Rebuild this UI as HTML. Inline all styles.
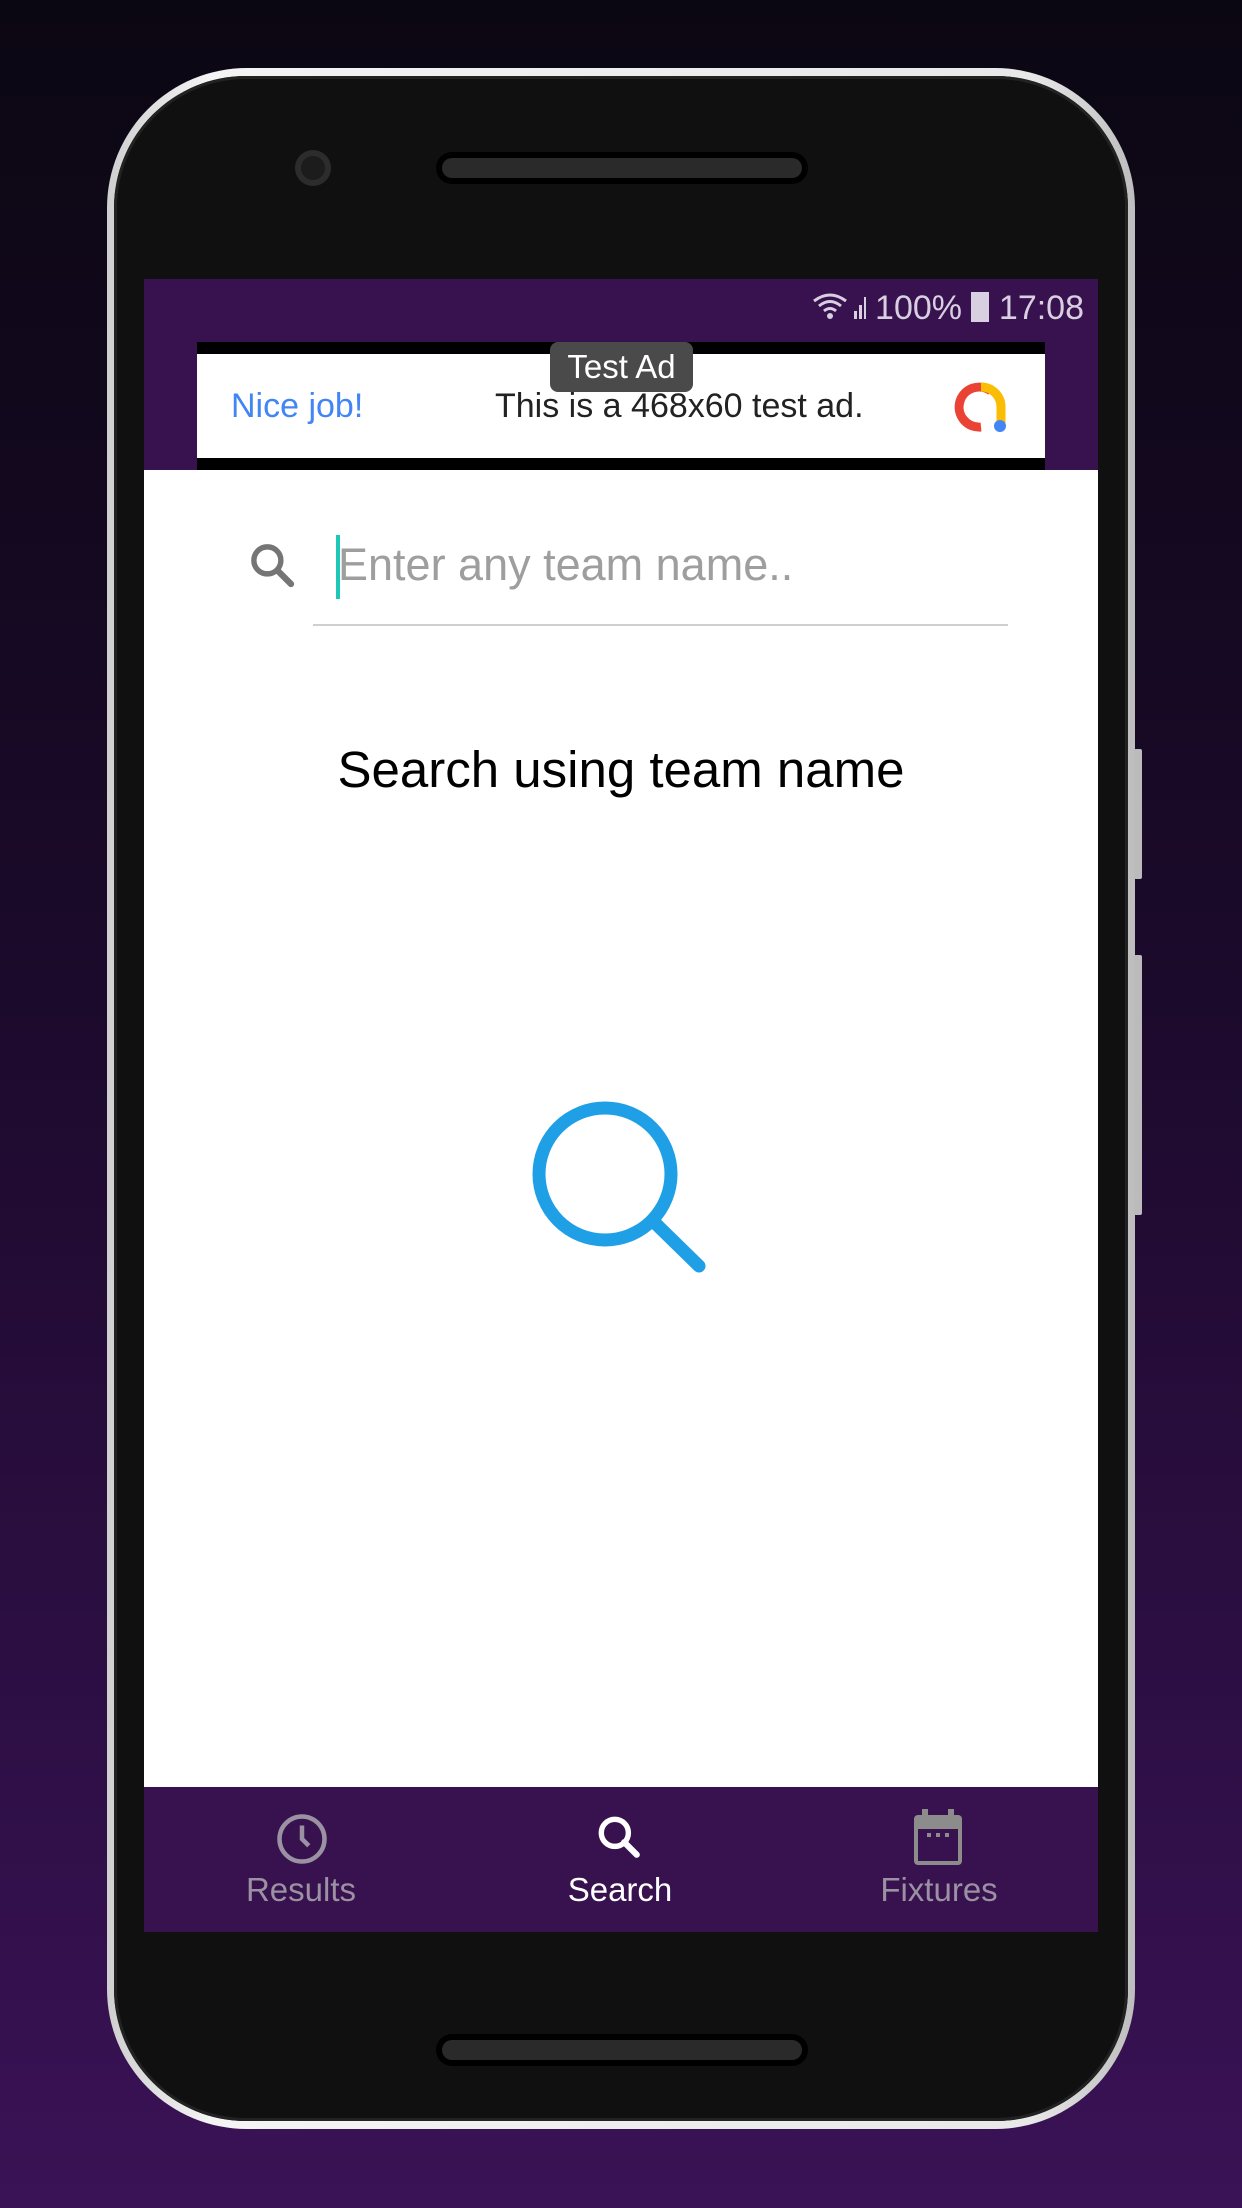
<!DOCTYPE html>
<html><head><meta charset="utf-8"><style>
*{margin:0;padding:0;box-sizing:border-box}
html,body{width:1242px;height:2208px;overflow:hidden}
body{background:linear-gradient(180deg,#0b0712 0%,#1c0a2c 45%,#3a1256 100%);position:relative;font-family:"Liberation Sans",sans-serif}
.rim{position:absolute;left:107px;top:68px;width:1028px;height:2061px;border-radius:140px;background:linear-gradient(90deg,#cfcfcf,#f4f4f4 10%,#e8e8e8 90%,#bdbdbd)}
.body{position:absolute;left:114px;top:76px;width:1014px;height:2045px;border-radius:132px;background:#101010;box-shadow:inset 0 0 0 3px #222}
.btn{position:absolute;left:1134px;width:8px;background:#bbb;border-radius:2px}
.spk{position:absolute;left:436px;width:372px;height:32px;border-radius:16px;background:#000}
.spk:after{content:"";position:absolute;left:6px;top:6px;right:6px;bottom:6px;border-radius:12px;background:#2a2a2a}
.cam{position:absolute;left:295px;top:150px;width:36px;height:36px;border-radius:50%;background:#1c1c1c;box-shadow:inset 0 0 0 6px #2c2c2c}
.screen{position:absolute;left:144px;top:279px;width:954px;height:1653px;background:#fff;overflow:hidden}
.top{position:absolute;left:0;top:0;width:954px;height:191px;background:#38114f}
.status{position:absolute;right:14px;top:10px;color:#d8cfe0;font-size:34px}
.ad{position:absolute;left:53px;top:63px;width:848px;height:128px;background:#000}
.adw{position:absolute;left:0;top:12px;width:848px;height:104px;background:#fff}
.nav{position:absolute;left:0;top:1508px;width:954px;height:145px;background:#38114f}
.lbl{position:absolute;top:84px;font-size:33px;transform:translateX(-50%);color:#9a92a2}
</style></head><body>
<div class="rim"></div>
<div class="btn" style="top:749px;height:130px"></div>
<div class="btn" style="top:955px;height:260px"></div>
<div class="body"></div>
<div class="cam"></div>
<div class="spk" style="top:152px"></div>
<div class="spk" style="top:2034px"></div>
<div class="screen">
 <div class="top">
  <div class="status">
   <svg width="56" height="34" viewBox="0 0 56 34" style="vertical-align:-4px"><path d="M4 12 Q20 0 36 12 M9 17 Q20 8 31 17 M14 22 Q20 17 26 22" stroke="#d8cfe0" stroke-width="3" fill="none"/><circle cx="20" cy="27" r="3" fill="#d8cfe0"/><path d="M44 30h3v-8h-3zM49 30h3v-14h-3zM54 30h2v-22h-2z" fill="#d8cfe0"/></svg> 100% <span style="display:inline-block;width:18px;height:30px;background:#d8cfe0;vertical-align:-3px"></span> 17:08
  </div>
  <div class="ad"><div class="adw">
   <div style="position:absolute;left:34px;top:33px;font-size:34px;color:#4285f4">Nice job!</div>
   <div style="position:absolute;left:298px;top:33px;font-size:34px;color:#222">This is a 468x60 test ad.</div>
   <svg style="position:absolute;left:756px;top:25px" width="56" height="56" viewBox="0 0 56 56"><path d="M38 12 A20 20 0 1 0 28 48" stroke="#ea4335" stroke-width="9" fill="none"/><path d="M28 8 A20 20 0 0 1 48 28 V44" stroke="#fbbc04" stroke-width="9" fill="none"/><circle cx="47" cy="47" r="6" fill="#4285f4"/></svg>
  </div>
  <div style="position:absolute;left:353px;top:0;width:143px;height:50px;background:#4a4a4a;border-radius:8px;color:#fff;font-size:33px;text-align:center;line-height:50px">Test Ad</div>
  </div>
 </div>
 <svg style="position:absolute;left:102px;top:260px" width="54" height="54" viewBox="0 0 24 24"><circle cx="9.5" cy="9.5" r="6" stroke="#757575" stroke-width="2.4" fill="none"/><path d="M14 14l6 6" stroke="#757575" stroke-width="2.8" stroke-linecap="round"/></svg>
 <div style="position:absolute;left:192px;top:256px;width:4px;height:64px;background:#1ec8b8"></div>
 <div style="position:absolute;left:194px;top:260px;font-size:45px;color:#9e9e9e">Enter any team name..</div>
 <div style="position:absolute;left:169px;top:345px;width:695px;height:2px;background:#cfcfcf"></div>
 <div style="position:absolute;left:0;width:954px;top:461px;text-align:center;font-size:51px;color:#000">Search using team name</div>
 <svg style="position:absolute;left:380px;top:820px" width="200" height="200" viewBox="0 0 200 200"><circle cx="81" cy="75" r="66" stroke="#1e9fe6" stroke-width="13" fill="none"/><path d="M130 123 L175 167" stroke="#1e9fe6" stroke-width="13" stroke-linecap="round"/></svg>
 <div class="nav">
  <svg style="position:absolute;left:131px;top:25px" width="54" height="54" viewBox="0 0 24 24"><circle cx="12" cy="12" r="10" stroke="#9a92a2" stroke-width="2" fill="none"/><path d="M12 6v6l3 3" stroke="#9a92a2" stroke-width="2" fill="none"/></svg>
  <div class="lbl" style="left:157px">Results</div>
  <svg style="position:absolute;left:450px;top:25px" width="50" height="50" viewBox="0 0 24 24"><circle cx="10" cy="10" r="6.5" stroke="#fff" stroke-width="2.6" fill="none"/><path d="M14.5 14.5l6 6" stroke="#fff" stroke-width="3" stroke-linecap="round"/></svg>
  <div class="lbl" style="left:476px;color:#fff">Search</div>
  <svg style="position:absolute;left:768px;top:22px" width="52" height="58" viewBox="0 0 26 29"><rect x="1" y="3" width="24" height="25" rx="2" fill="#8c8c8c"/><rect x="3" y="10" width="20" height="16" fill="#38114f"/><rect x="5" y="0" width="3" height="5" fill="#8c8c8c"/><rect x="18" y="0" width="3" height="5" fill="#8c8c8c"/><rect x="7.5" y="12" width="2" height="2" fill="#8c8c8c"/><rect x="12" y="12" width="2" height="2" fill="#8c8c8c"/><rect x="16.5" y="12" width="2" height="2" fill="#8c8c8c"/></svg>
  <div class="lbl" style="left:795px">Fixtures</div>
 </div>
</div>
</body></html>
